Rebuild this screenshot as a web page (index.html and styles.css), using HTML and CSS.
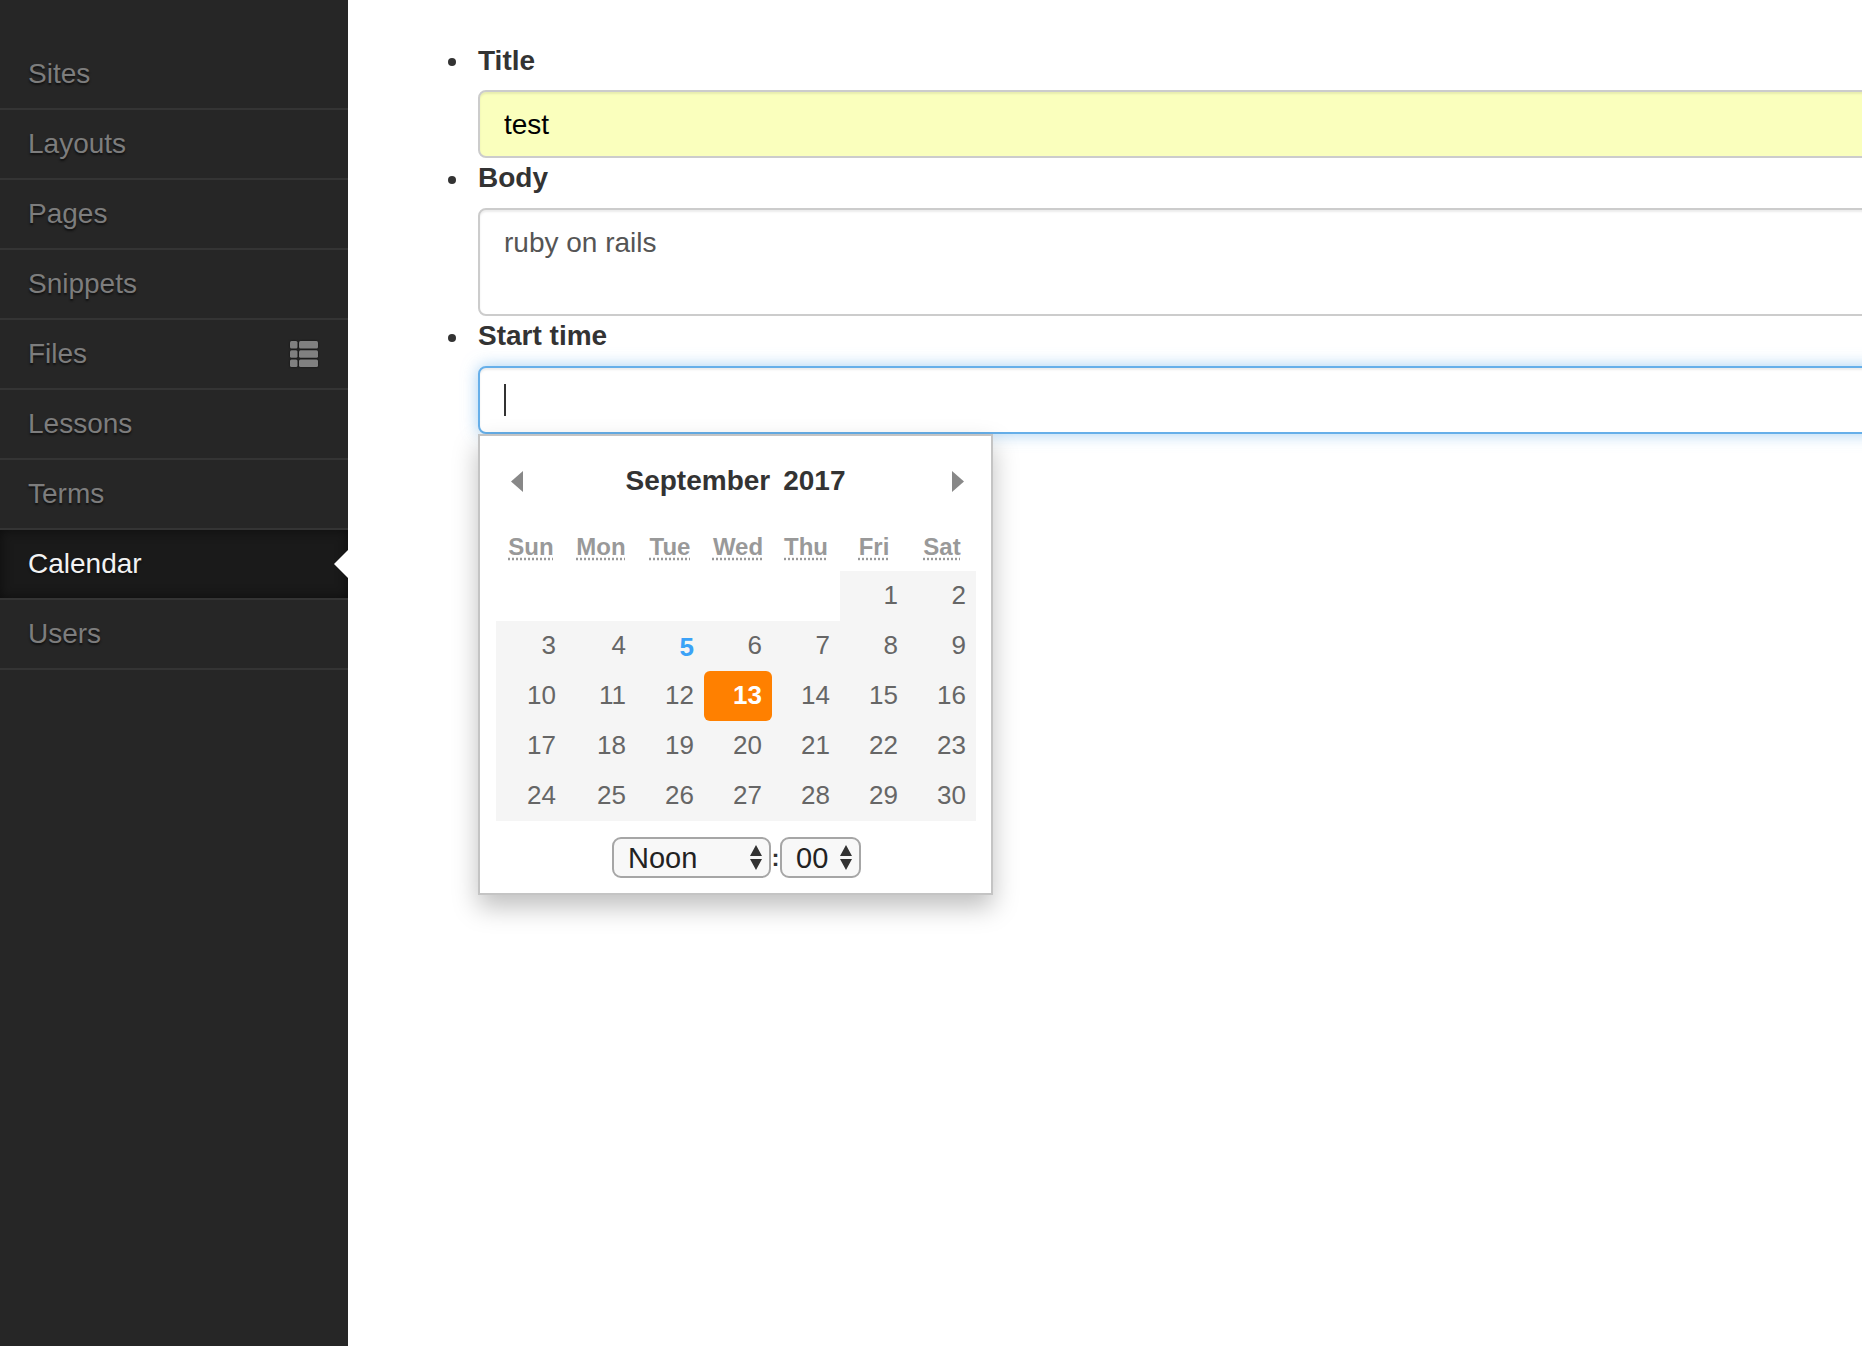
FILE: index.html
```html
<!DOCTYPE html>
<html lang="en">
<head>
    <meta charset="UTF-8">
    <meta name="viewport" content="width=device-width, initial-scale=1.0">
    <title>Calendar</title>
    <link rel="stylesheet" href="styles.css">
</head>
<body>
    <nav class="sidebar">
        <ul class="menu">
            <li><a href="#">Sites</a></li>
            <li><a href="#">Layouts</a></li>
            <li><a href="#">Pages</a></li>
            <li><a href="#">Snippets</a></li>
            <li>
                <a href="#">Files</a>
                <svg class="files-icon" width="28" height="26" viewBox="0 0 28 26" aria-hidden="true">
                    <rect x="0" y="0" width="7.500" height="7.500" rx="1.500"/>
                    <rect x="9" y="0" width="19" height="7.500" rx="1.500"/>
                    <rect x="0" y="9.250" width="7.500" height="7.500" rx="1.500"/>
                    <rect x="9" y="9.250" width="19" height="7.500" rx="1.500"/>
                    <rect x="0" y="18.500" width="7.500" height="7.500" rx="1.500"/>
                    <rect x="9" y="18.500" width="19" height="7.500" rx="1.500"/>
                </svg>
            </li>
            <li><a href="#">Lessons</a></li>
            <li><a href="#">Terms</a></li>
            <li class="active"><a href="#">Calendar</a></li>
            <li><a href="#">Users</a></li>
        </ul>
    </nav>

    <main class="content">
        <ul class="fields">
            <li>
                <label for="title">Title</label>
                <input class="field autofilled" id="title" type="text" value="test">
            </li>
            <li>
                <label for="body">Body</label>
                <textarea class="field body-field" id="body">ruby on rails</textarea>
            </li>
            <li>
                <label for="start">Start time</label>
                <div class="field focused" id="start"><span class="caret"></span></div>

                <div class="picker">
                    <div class="picker-head">
                        <svg width="12" height="21" viewBox="0 0 12 21" aria-hidden="true"><path d="M12 0v21L0 10.500z"/></svg>
                        <div class="picker-month"><span>September</span><span>2017</span></div>
                        <svg width="12" height="21" viewBox="0 0 12 21" aria-hidden="true"><path d="M0 0v21l12-10.500z"/></svg>
                    </div>
                    <table class="days">
                        <thead>
                            <tr>
                                <th><abbr>Sun</abbr></th>
                                <th><abbr>Mon</abbr></th>
                                <th><abbr>Tue</abbr></th>
                                <th><abbr>Wed</abbr></th>
                                <th><abbr>Thu</abbr></th>
                                <th><abbr>Fri</abbr></th>
                                <th><abbr>Sat</abbr></th>
                            </tr>
                        </thead>
                        <tbody>
                            <tr>
                                <td class="blank"></td><td class="blank"></td><td class="blank"></td><td class="blank"></td><td class="blank"></td>
                                <td>1</td><td>2</td>
                            </tr>
                            <tr>
                                <td>3</td><td>4</td><td class="today">5</td><td>6</td><td>7</td><td>8</td><td>9</td>
                            </tr>
                            <tr>
                                <td>10</td><td>11</td><td>12</td><td class="selected"><span>13</span></td><td>14</td><td>15</td><td>16</td>
                            </tr>
                            <tr>
                                <td>17</td><td>18</td><td>19</td><td>20</td><td>21</td><td>22</td><td>23</td>
                            </tr>
                            <tr>
                                <td>24</td><td>25</td><td>26</td><td>27</td><td>28</td><td>29</td><td>30</td>
                            </tr>
                        </tbody>
                    </table>
                    <div class="picker-time">
                        <div class="time-select hour">
                            <select><option>Noon</option></select>
                            <svg width="12" height="25" viewBox="0 0 12 25" aria-hidden="true"><path d="M6 0l6 11H0zM0 14h12L6 25z"/></svg>
                        </div>
                        <span class="colon">:</span>
                        <div class="time-select minute">
                            <select><option>00</option></select>
                            <svg width="12" height="25" viewBox="0 0 12 25" aria-hidden="true"><path d="M6 0l6 11H0zM0 14h12L6 25z"/></svg>
                        </div>
                    </div>
                </div>
            </li>
        </ul>
    </main>
</body>
</html>
```
FILE: styles.css
```css
html, body {
    height: 100%;
}
body {
    margin: 0;
    display: flex;
    overflow: hidden;
    background-color: #fff;
    color: #333;
    font-family: "Liberation Sans", Arial, sans-serif;
    font-size: 28px;
    line-height: 40px;
}

/* Sidebar */
.sidebar {
    flex: 0 0 348px;
    background-color: #262626;
    padding-top: 40px;
    box-sizing: border-box;
}
.menu {
    list-style: none;
    margin: 0;
    padding: 0;
}
.menu li {
    position: relative;
    display: flex;
    align-items: center;
    justify-content: space-between;
    height: 68px;
    padding: 0 30px 0 28px;
    border-bottom: 2px solid #343434;
}
.menu a {
    color: #7d7d7d;
    text-decoration: none;
    text-shadow: 0 2px 2px #111;
}
.menu .active {
    background-color: #1a1a1a;
    box-shadow: inset 0 0 12px #0d0d0d;
}
.menu .active a {
    color: #f2f2f2;
}
.menu .active::after {
    content: "";
    position: absolute;
    right: 0;
    top: 20px;
    border-style: solid;
    border-width: 14px 14px 14px 0;
    border-color: transparent #fff transparent transparent;
}
.files-icon {
    fill: #808080;
    filter: drop-shadow(0 0 1px #111);
}

/* Form */
.content {
    flex: 1;
    min-width: 0;
    padding-top: 40px;
}
.fields {
    list-style: none;
    margin: 0;
    padding: 0 0 0 130px;
    width: 1800px;
}
.fields li {
    position: relative;
}
.fields li::before {
    content: "";
    position: absolute;
    left: -30px;
    top: 18px;
    width: 8px;
    height: 8px;
    border-radius: 50%;
    background-color: #333;
}
.fields label {
    display: block;
    margin-bottom: 10px;
    font-weight: bold;
}
.fields li:first-child label {
    padding-top: 1px;
    margin-bottom: 9px;
}
.field {
    display: block;
    width: 100%;
    height: 68px;
    box-sizing: border-box;
    margin: 0;
    padding: 13px 24px 11px;
    border: 2px solid #ccc;
    border-radius: 8px;
    background-color: #fff;
    box-shadow: inset 0 2px 2px rgba(0, 0, 0, 0.075);
    color: #555;
    font-family: inherit;
    font-size: 28px;
    line-height: 40px;
    outline: none;
    resize: none;
}
.autofilled {
    background-color: #faffbd;
    color: #000;
}
.body-field {
    height: 108px;
}
.focused {
    border-color: #66afe9;
    box-shadow: inset 0 2px 2px rgba(0, 0, 0, 0.075), 0 0 16px rgba(102, 175, 233, 0.6);
}
.caret {
    display: block;
    width: 2px;
    height: 32px;
    margin-top: 3px;
    background-color: #333;
}

/* Date picker */
.picker {
    width: 515px;
    height: 461px;
    box-sizing: border-box;
    padding: 0 15px 0 16px;
    border: 2px solid #c4c4c4;
    background-color: #fff;
    box-shadow: 0 12px 24px rgba(0, 0, 0, 0.25);
}
.picker-head {
    display: flex;
    align-items: center;
    justify-content: space-between;
    height: 87px;
    box-sizing: border-box;
    padding: 3px 12px 0 15px;
    fill: #888;
}
.picker-month {
    display: flex;
    gap: 13px;
    margin-right: 4px;
    font-weight: bold;
    color: #333;
}
.days {
    width: 480px;
    table-layout: fixed;
    border-collapse: collapse;
    border-spacing: 0;
    font-size: 26px;
}
.days th {
    width: 68px;
    height: 48px;
    padding: 0;
    color: #999;
    font-size: 24px;
    font-weight: bold;
    text-align: center;
}
.days th:nth-child(1), .days th:nth-child(2) {
    width: 70px;
}
.days abbr {
    text-decoration: underline dotted;
    text-underline-offset: 3px;
}
.days td {
    height: 50px;
    box-sizing: border-box;
    padding: 0 10px 2px 0;
    background-color: #f5f5f5;
    color: #666;
    text-align: right;
}
.days .blank {
    background-color: #fff;
}
.days .today {
    padding: 1px 10px 0 0;
    color: #3ba2f7;
    font-weight: bold;
}
.days .selected {
    padding: 0;
}
.days .selected span {
    display: block;
    height: 50px;
    padding-right: 10px;
    border-radius: 6px;
    background-color: #ff8000;
    color: #fff;
    font-weight: bold;
    line-height: 48px;
}
.picker-time {
    display: flex;
    align-items: center;
    justify-content: center;
    padding-left: 1px;
    margin-top: 16px;
    color: #333;
}
.colon {
    width: 9px;
    text-align: center;
    font-weight: bold;
    font-size: 24px;
}
.time-select {
    position: relative;
    display: flex;
}
.time-select select {
    appearance: none;
    -webkit-appearance: none;
    height: 41px;
    box-sizing: border-box;
    padding: 0 0 0 14px;
    border: 2px solid #a6a6a6;
    border-radius: 9px;
    background-color: #f8f8f8;
    color: #222;
    font-family: inherit;
    font-size: 29px;
    outline: none;
}
.hour select {
    width: 159px;
}
.minute select {
    width: 81px;
}
.time-select svg {
    position: absolute;
    right: 9px;
    top: 8px;
    fill: #333;
}
```
